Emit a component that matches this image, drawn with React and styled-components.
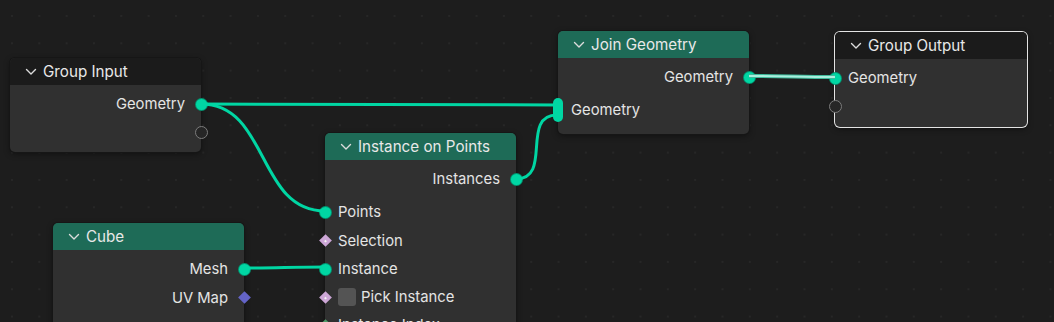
import React from "react";
import styled, { createGlobalStyle } from "styled-components";

const Global = createGlobalStyle`
  html, body { margin: 0; padding: 0; background: #1d1d1d; overflow: hidden; }
  body { font-family: Inter, "Noto Sans", "DejaVu Sans", sans-serif; }
`;

const Canvas = styled.div`
  position: relative;
  width: 1054px;
  height: 322px;
  overflow: hidden;
  background-color: #1d1d1d;
  background-image: radial-gradient(circle, #272727 0.9px, transparent 1.3px);
  background-size: 27.33px 27.33px;
  background-position: -1.7px 2.3px;
`;

const Wires = styled.svg`
  position: absolute;
  left: 0;
  top: 0;
  pointer-events: none;
  z-index: 2;
`;

const NodeBox = styled.div`
  position: absolute;
  left: ${(p) => p.$x}px;
  top: ${(p) => p.$y}px;
  width: ${(p) => p.$w}px;
  height: ${(p) => (p.$h ? `${p.$h}px` : "auto")};
  display: flex;
  flex-direction: column;
  background: #303030;
  border-radius: 5px;
  box-shadow: ${(p) =>
    p.$selected
      ? "0 0 0 1px #e4e4e4, 0 2px 6px rgba(0,0,0,0.45)"
      : "0 0 0 1px #161616, 0 2px 6px rgba(0,0,0,0.45)"};
  z-index: 1;
`;

const Header = styled.div`
  height: 27px;
  flex: none;
  display: flex;
  align-items: center;
  gap: 6px;
  padding-left: 15px;
  background: ${(p) => p.$color};
  border-radius: 5px 5px 0 0;
  color: #e8e8e8;
  font-size: 15.2px;
`;

const Body = styled.div`
  display: flex;
  flex-direction: column;
  padding: ${(p) => p.$pt ?? 5}px 0 6px;
`;

const Row = styled.div`
  position: relative;
  height: ${(p) => p.$h ?? 28}px;
  margin-top: ${(p) => p.$mt ?? 0}px;
  display: flex;
  align-items: center;
  justify-content: ${(p) => (p.$out ? "flex-end" : "flex-start")};
  padding: 0 ${(p) => (p.$out ? 16 : 0)}px 0 ${(p) => (p.$out ? 0 : 13)}px;
  color: #e4e4e4;
  font-size: 14.8px;
  white-space: nowrap;
`;

const Socket = styled.span`
  position: absolute;
  top: 50%;
  ${(p) => (p.$out ? "right: -6.5px;" : "left: -6.5px;")}
  width: 13px;
  height: 13px;
  margin-top: -6.5px;
  box-sizing: border-box;
  border-radius: 50%;
  background: ${(p) => (p.$empty ? "#262626" : p.$color)};
  border: ${(p) => (p.$empty ? "1.5px solid #7c7c7c" : "1px solid rgba(0,0,0,0.3)")};
  z-index: 3;
`;

const MultiSocket = styled.span`
  position: absolute;
  left: -5px;
  top: 50%;
  margin-top: -12px;
  width: 10px;
  height: 24px;
  border-radius: 5px;
  background: #00d6a3;
  z-index: 3;
`;

const Diamond = styled.span`
  position: absolute;
  top: 50%;
  ${(p) => (p.$out ? "right: -4.5px;" : "left: -4.5px;")}
  width: 9px;
  height: 9px;
  margin-top: -4.5px;
  transform: rotate(45deg);
  background: ${(p) => p.$color};
  display: flex;
  align-items: center;
  justify-content: center;
  z-index: 3;
  &::after {
    content: "";
    display: ${(p) => (p.$dot ? "block" : "none")};
    width: 2px;
    height: 2px;
    background: #f4f4f4;
  }
`;

const Check = styled.span`
  width: 18px;
  height: 18px;
  border-radius: 3px;
  background: #545454;
  margin-right: 5px;
  flex: none;
`;

const Chevron = () => (
  <svg width="12" height="8" viewBox="0 0 12 8">
    <path d="M1.5 1.5 L6 6 L10.5 1.5" fill="none" stroke="#dcdcdc" strokeWidth="1.4" strokeLinecap="round" strokeLinejoin="round" />
  </svg>
);

const TEAL = "#00d6a3";
const DARK = "#1b1b1b";
const GREEN = "#1e6b57";

function Node({ x, y, w = 191, h, title, color, selected, pt, children }) {
  return (
    <NodeBox $x={x} $y={y} $w={w} $h={h} $selected={selected}>
      <Header $color={color}>
        <Chevron />
        <span>{title}</span>
      </Header>
      <Body $pt={pt}>{children}</Body>
    </NodeBox>
  );
}

const curve = (x1, y1, x2, y2, k = 0.5) => {
  const d = Math.max(Math.abs(x2 - x1) * k, 10);
  return `M${x1} ${y1} C${x1 + d} ${y1} ${x2 - d} ${y2} ${x2} ${y2}`;
};

export default function App() {
  return (
    <>
      <Global />
      <Canvas>
        <Wires width="1054" height="322">
          <path d={curve(201, 104, 558, 105, 0.3)} stroke={TEAL} strokeWidth="3" fill="none" />
          <path d={curve(201, 104, 325, 211, 0.55)} stroke={TEAL} strokeWidth="3" fill="none" />
          <path d={curve(516, 179, 557, 115, 0.9)} stroke={TEAL} strokeWidth="3" fill="none" />
          <path d={curve(244, 268, 325, 267, 0.4)} stroke={TEAL} strokeWidth="3" fill="none" />
          <path d={curve(749, 76, 835, 77, 0.4)} stroke="#3fb99a" strokeWidth="4" fill="none" />
          <path d={curve(749, 76, 835, 77, 0.4)} stroke="#a9eedd" strokeWidth="2" fill="none" />
        </Wires>

        <Node x={10} y={58} title="Group Input" color={DARK}>
          <Row $out>
            Geometry
            <Socket $out $color={TEAL} />
          </Row>
          <Row $out>
            <Socket $out $empty />
          </Row>
        </Node>

        <Node x={558} y={31} title="Join Geometry" color={GREEN}>
          <Row $out>
            Geometry
            <Socket $out $color={TEAL} />
          </Row>
          <Row $h={37}>
            Geometry
            <MultiSocket />
          </Row>
        </Node>

        <Node x={835} y={32} w={192} title="Group Output" color={DARK} selected>
          <Row>
            Geometry
            <Socket $color={TEAL} />
          </Row>
          <Row $h={29}>
            <Socket $empty />
          </Row>
        </Node>

        <Node x={325} y={133} h={240} title="Instance on Points" color={GREEN} pt={5}>
          <Row $out>
            Instances
            <Socket $out $color={TEAL} />
          </Row>
          <Row $mt={5}>
            Points
            <Socket $color={TEAL} />
          </Row>
          <Row $h={29}>
            Selection
            <Diamond $color="#cca6d6" $dot />
          </Row>
          <Row>
            Instance
            <Socket $color={TEAL} />
          </Row>
          <Row>
            <Check />
            Pick Instance
            <Diamond $color="#cca6d6" $dot />
          </Row>
          <Row>
            Instance Index
            <Diamond $color="#4e9a68" $dot />
          </Row>
        </Node>

        <Node x={53} y={223} h={200} title="Cube" color={GREEN}>
          <Row $out>
            Mesh
            <Socket $out $color={TEAL} />
          </Row>
          <Row $out $h={29}>
            UV Map
            <Diamond $out $color="#6464c8" />
          </Row>
        </Node>
      </Canvas>
    </>
  );
}
